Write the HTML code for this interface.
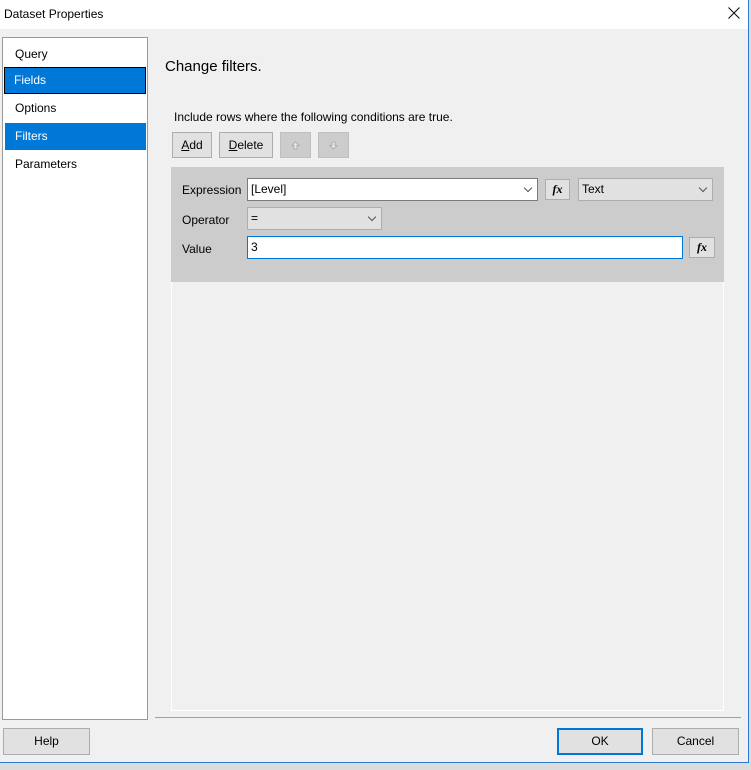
<!DOCTYPE html>
<html><head><style>
*{box-sizing:border-box;margin:0;padding:0}
body{width:751px;height:770px;background:#dcdcdc;font-family:"Liberation Sans",sans-serif;font-size:12px;color:#000;position:relative;overflow:hidden}
.win{position:absolute;left:0;top:0;width:749px;height:763px;background:#f0f0f0;border-right:1px solid #2b79d0;border-bottom:1px solid #2b79d0}
.title{position:absolute;left:0;top:0;width:748px;height:29px;background:#fff}
.a{position:absolute}
.list{left:2px;top:37px;width:146px;height:683px;background:#fff;border:1px solid #9a9a9a}
.item{position:absolute;left:2px;width:141px;height:27px;padding-left:10px;line-height:26px;font-size:12px}
.sel{background:#0078d7;color:#fff}
.btn{position:absolute;background:#e1e1e1;border:1px solid #adadad;text-align:center;font-size:12px}
.dis{background:#cccccc;border-color:#bfbfbf}
.inp{position:absolute;background:#fff;border:1px solid #7a7a7a;font-size:12px;padding-left:3px;line-height:21px}
.combo{position:absolute;background:#e1e1e1;border:1px solid #adadad;font-size:12px;padding-left:3px;line-height:21px}
.chev{position:absolute;right:6px;top:6px;width:6px;height:6px;border-right:1px solid #555;border-bottom:1px solid #555;transform:rotate(45deg)}
.fx{font-family:"Liberation Serif",serif;font-style:italic;font-weight:bold;font-size:12px;line-height:19px}
</style></head><body>
<div class="win">
<div class="title"><div class="a" style="left:4px;top:7px;font-size:12px">Dataset Properties</div>
<svg class="a" style="left:728px;top:7px" width="12" height="12"><path d="M0.5 0.5L11.5 11.5M11.5 0.5L0.5 11.5" stroke="#111" stroke-width="1.1"/></svg></div>
<div class="a list">
<div class="item" style="top:3px">Query</div>
<div class="item sel" style="top:29px;border:1px solid #000;padding-left:9px;line-height:24px;width:142px;left:1px">Fields</div>
<div class="item" style="top:57px">Options</div>
<div class="item sel" style="top:85px">Filters</div>
<div class="item" style="top:113px">Parameters</div>
</div>
<div class="a" style="left:165px;top:58px;font-size:15px">Change filters.</div>
<div class="a" style="left:174px;top:110px">Include rows where the following conditions are true.</div>
<div class="btn" style="left:172px;top:132px;width:40px;height:26px;line-height:24px"><u>A</u>dd</div>
<div class="btn" style="left:219px;top:132px;width:54px;height:26px;line-height:24px"><u>D</u>elete</div>
<div class="btn dis" style="left:280px;top:132px;width:31px;height:26px"><svg width="9" height="9" style="margin-top:8px"><path d="M4.5 1L8 4.5H6V8H3V4.5H1Z" fill="#e8e8e8" stroke="#b0b0b0"/></svg></div>
<div class="btn dis" style="left:318px;top:132px;width:31px;height:26px"><svg width="9" height="9" style="margin-top:8px"><path d="M4.5 8L8 4.5H6V1H3V4.5H1Z" fill="#e8e8e8" stroke="#b0b0b0"/></svg></div>
<div class="a" style="left:171px;top:167px;width:553px;height:544px;border:1px solid #fff;border-top:0;background:#f0f0f0"></div>
<div class="a" style="left:171px;top:167px;width:553px;height:115px;background:#cccccc"></div>
<div class="a" style="left:182px;top:183px">Expression</div>
<div class="inp" style="left:247px;top:178px;width:291px;height:23px">[Level]<div class="chev"></div></div>
<div class="btn fx" style="left:545px;top:179px;width:25px;height:21px">fx</div>
<div class="combo" style="left:578px;top:178px;width:135px;height:23px">Text<div class="chev"></div></div>
<div class="a" style="left:182px;top:213px">Operator</div>
<div class="combo" style="left:247px;top:207px;width:135px;height:23px">=<div class="chev"></div></div>
<div class="a" style="left:182px;top:242px">Value</div>
<div class="inp" style="left:247px;top:236px;width:436px;height:23px;border-color:#0078d7">3</div>
<div class="btn fx" style="left:689px;top:237px;width:26px;height:21px">fx</div>
<div class="a" style="left:155px;top:717px;width:586px;height:1px;background:#a0a0a0"></div>
<div class="btn" style="left:3px;top:728px;width:87px;height:27px;line-height:25px">Help</div>
<div class="btn" style="left:557px;top:728px;width:86px;height:27px;line-height:23px;border:2px solid #0078d7">OK</div>
<div class="btn" style="left:652px;top:728px;width:87px;height:27px;line-height:25px">Cancel</div>
</div>
</body></html>
